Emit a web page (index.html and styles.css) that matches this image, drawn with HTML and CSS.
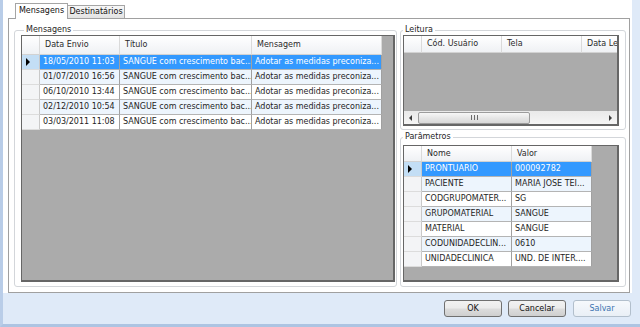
FILE: index.html
```html
<!DOCTYPE html>
<html lang="pt">
<head>
<meta charset="utf-8">
<title>Mensagens</title>
<link rel="stylesheet" href="styles.css">
</head>
<body>
<div class="window">
  <div class="tabctl">
    <div class="tabs">
      <div class="tab active">Mensagens</div>
      <div class="tab inactive">Destinatários</div>
    </div>
    <div class="page">
      <fieldset class="group g-msg">
        <legend>Mensagens</legend>
        <div class="grid grid-msg">
          <div class="row hdr cols-msg">
            <div class="rh"></div><div class="hc">Data Envio</div><div class="hc">Título</div><div class="hc">Mensagem</div>
          </div>
          <div class="row cols-msg sel">
            <div class="rh"><span class="arrow"></span></div><div class="c">18/05/2010 11:03</div><div class="c">SANGUE com crescimento bac...</div><div class="c">Adotar as medidas preconiza...</div>
          </div>
          <div class="row cols-msg alt">
            <div class="rh"></div><div class="c">01/07/2010 16:56</div><div class="c">SANGUE com crescimento bac...</div><div class="c">Adotar as medidas preconiza...</div>
          </div>
          <div class="row cols-msg">
            <div class="rh"></div><div class="c">06/10/2010 13:44</div><div class="c">SANGUE com crescimento bac...</div><div class="c">Adotar as medidas preconiza...</div>
          </div>
          <div class="row cols-msg alt">
            <div class="rh"></div><div class="c">02/12/2010 10:54</div><div class="c">SANGUE com crescimento bac...</div><div class="c">Adotar as medidas preconiza...</div>
          </div>
          <div class="row cols-msg">
            <div class="rh"></div><div class="c">03/03/2011 11:08</div><div class="c">SANGUE com crescimento bac...</div><div class="c">Adotar as medidas preconiza...</div>
          </div>
        </div>
      </fieldset>
      <div class="rightcol">
        <fieldset class="group g-leit">
          <legend>Leitura</legend>
          <div class="grid grid-leit">
            <div class="row hdr hdr-leit cols-leit">
              <div class="rh"></div><div class="hc">Cód. Usuário</div><div class="hc">Tela</div><div class="hc">Data Leitura</div>
            </div>
            <div class="fill"></div>
            <div class="hscroll">
              <div class="sb-btn"><span class="sb-left"></span></div>
              <div class="sb-thumb">
                <svg width="7" height="5" viewBox="0 0 7 5"><path d="M0.5 0V5M3.5 0V5M6.5 0V5" stroke="#6b6b6b" stroke-width="1"/></svg>
              </div>
              <div class="sb-track"></div>
              <div class="sb-btn"><span class="sb-right"></span></div>
            </div>
          </div>
        </fieldset>
        <fieldset class="group g-par">
          <legend>Parâmetros</legend>
          <div class="grid grid-par">
            <div class="row hdr hdr-par cols-par">
              <div class="rh"></div><div class="hc">Nome</div><div class="hc">Valor</div>
            </div>
            <div class="row cols-par sel">
              <div class="rh"><span class="arrow"></span></div><div class="c">PRONTUARIO</div><div class="c">000092782</div>
            </div>
            <div class="row cols-par alt">
              <div class="rh"></div><div class="c">PACIENTE</div><div class="c">MARIA JOSE TEI...</div>
            </div>
            <div class="row cols-par">
              <div class="rh"></div><div class="c">CODGRUPOMATER...</div><div class="c">SG</div>
            </div>
            <div class="row cols-par alt">
              <div class="rh"></div><div class="c">GRUPOMATERIAL</div><div class="c">SANGUE</div>
            </div>
            <div class="row cols-par">
              <div class="rh"></div><div class="c">MATERIAL</div><div class="c">SANGUE</div>
            </div>
            <div class="row cols-par alt">
              <div class="rh"></div><div class="c">CODUNIDADECLIN...</div><div class="c">0610</div>
            </div>
            <div class="row cols-par">
              <div class="rh"></div><div class="c">UNIDADECLINICA</div><div class="c">UND. DE INTER....</div>
            </div>
          </div>
        </fieldset>
      </div>
    </div>
  </div>
  <div class="footer">
    <button class="btn">OK</button>
    <button class="btn">Cancelar</button>
    <button class="btn btn-dis">Salvar</button>
  </div>
</div>
</body>
</html>
```
FILE: styles.css
```css
body {
  margin: 0;
  width: 640px;
  height: 327px;
  overflow: hidden;
  font-family: "DejaVu Sans", sans-serif;
  font-size: 8px;
  color: #1e1e1e;
}

.window {
  box-sizing: border-box;
  width: 640px;
  height: 327px;
  display: flex;
  flex-direction: column;
  background: #dfeaf8;
  border-left: 3px solid #b9cde8;
  border-bottom: 3px solid #adc4e2;
}

.tabctl {
  box-sizing: border-box;
  height: 293px;
  margin-right: 8px;
  padding: 3px 2px 0 5px;
  background: #fff;
  display: flex;
  flex-direction: column;
}

.tabs {
  display: flex;
  align-items: flex-end;
  height: 15px;
  padding-left: 7px;
}

.tab {
  box-sizing: border-box;
  border: 1px solid #a5a5a5;
  border-bottom: none;
  text-align: center;
  white-space: nowrap;
  color: #111;
}

.tab.active {
  width: 53px;
  height: 16px;
  line-height: 14px;
  background: #fff;
  margin-bottom: -1px;
  position: relative;
  z-index: 1;
}

.tab.inactive {
  width: 57px;
  height: 13px;
  line-height: 12px;
  border-left: none;
  background: linear-gradient(#f7f7f7, #e3e3e3);
}

.page {
  flex: 1;
  box-sizing: border-box;
  border: 1px solid #a0a0a0;
  background: #fff;
  display: flex;
  gap: 3px;
  padding: 6px 3px 5px 5px;
}

.group {
  margin: 0;
  min-width: 0;
  box-sizing: border-box;
  border: 1px solid #d3d6da;
  border-radius: 3px;
}

.group legend {
  padding: 0 2px;
  line-height: 10px;
  color: #1e1e1e;
}

.g-msg {
  width: 383px;
  padding: 0 1px 4px 6px;
}

.g-msg legend {
  margin-left: 3px;
}

.rightcol {
  width: 226px;
  display: flex;
  flex-direction: column;
  gap: 2px;
}

.g-leit {
  padding: 0 6px 3px 2px;
}

.g-par {
  padding: 3px 6px 4px 2px;
}

.grid {
  box-sizing: border-box;
  background: #ababab;
  border: 1px solid #666;
  border-right-width: 2px;
  border-bottom-width: 2px;
  overflow: hidden;
}

.grid-msg {
  width: 374px;
  height: 247px;
}

.grid-leit {
  width: 216px;
  height: 91px;
  display: flex;
  flex-direction: column;
}

.grid-par {
  width: 216px;
  height: 137px;
}

.row {
  display: grid;
  width: max-content;
}

.cols-msg {
  grid-template-columns: 18px 80px 132px 130px;
}

.cols-leit {
  grid-template-columns: 18px 80px 80px 80px;
}

.cols-par {
  grid-template-columns: 18px 90px 80px;
}

.row > div {
  box-sizing: border-box;
  white-space: nowrap;
  overflow: hidden;
}

.c {
  height: 15px;
  line-height: 14px;
  padding-left: 3px;
  background: #fff;
  border-right: 1px solid #a0a0a0;
  border-bottom: 1px solid #b4b4b4;
}

.alt .c {
  background: #edf5fd;
}

.sel .c {
  background: #3399ff;
  color: #fff;
}

.rh {
  height: 15px;
  background: #f3f4f6;
  border-right: 1px solid #c9c9c9;
  border-bottom: 1px solid #dcdcdc;
  display: flex;
  align-items: center;
  padding-left: 4px;
}

.sel .rh {
  background: #c3def5;
}

.arrow {
  width: 0;
  height: 0;
  border-left: 4px solid #000;
  border-top: 4px solid transparent;
  border-bottom: 4px solid transparent;
}

.hdr > div {
  height: 19px;
  line-height: 18px;
  background: linear-gradient(#ffffff, #f7f8fa 50%, #eff1f4);
  border-right: 1px solid #dadada;
  border-bottom: 1px solid #d2d2d2;
}

.hdr-leit > div {
  height: 17px;
  line-height: 16px;
}

.hdr-par > div {
  height: 16px;
  line-height: 15px;
}

.hc {
  padding-left: 5px;
  color: #2a2a2a;
}

.fill {
  flex: 1;
}

.hscroll {
  height: 13px;
  display: flex;
  align-items: center;
  background: linear-gradient(#e9e9e9, #f5f5f5);
}

.sb-btn {
  width: 13px;
  height: 13px;
  display: flex;
  align-items: center;
  justify-content: center;
}

.sb-left {
  width: 0;
  height: 0;
  border-right: 3px solid #3c3c3c;
  border-top: 3px solid transparent;
  border-bottom: 3px solid transparent;
}

.sb-right {
  width: 0;
  height: 0;
  border-left: 3px solid #3c3c3c;
  border-top: 3px solid transparent;
  border-bottom: 3px solid transparent;
}

.sb-thumb {
  box-sizing: border-box;
  width: 112px;
  height: 12px;
  margin-left: 1px;
  border: 1px solid #9c9c9c;
  border-radius: 2px;
  background: linear-gradient(#f7f7f7, #e6e6e6 50%, #d8d8d8);
  display: flex;
  align-items: center;
  justify-content: center;
}

.sb-track {
  flex: 1;
}

.footer {
  flex: 1;
  display: flex;
  justify-content: flex-end;
  align-items: flex-start;
  padding: 7px 9px 0 0;
}

.btn {
  box-sizing: border-box;
  width: 58px;
  height: 17px;
  margin-left: 6px;
  padding: 0;
  font-family: "DejaVu Sans", sans-serif;
  font-size: 8px;
  color: #111;
  border: 1px solid #707070;
  border-radius: 3px;
  background: linear-gradient(#f2f2f2 0%, #ebebeb 49%, #dddddd 51%, #cfcfcf 100%);
}

.btn-dis {
  margin-left: 7px;
  border-color: #b2bfcc;
  background: linear-gradient(#f6f9fc, #e9eff6);
  color: #3d74b1;
}
```
